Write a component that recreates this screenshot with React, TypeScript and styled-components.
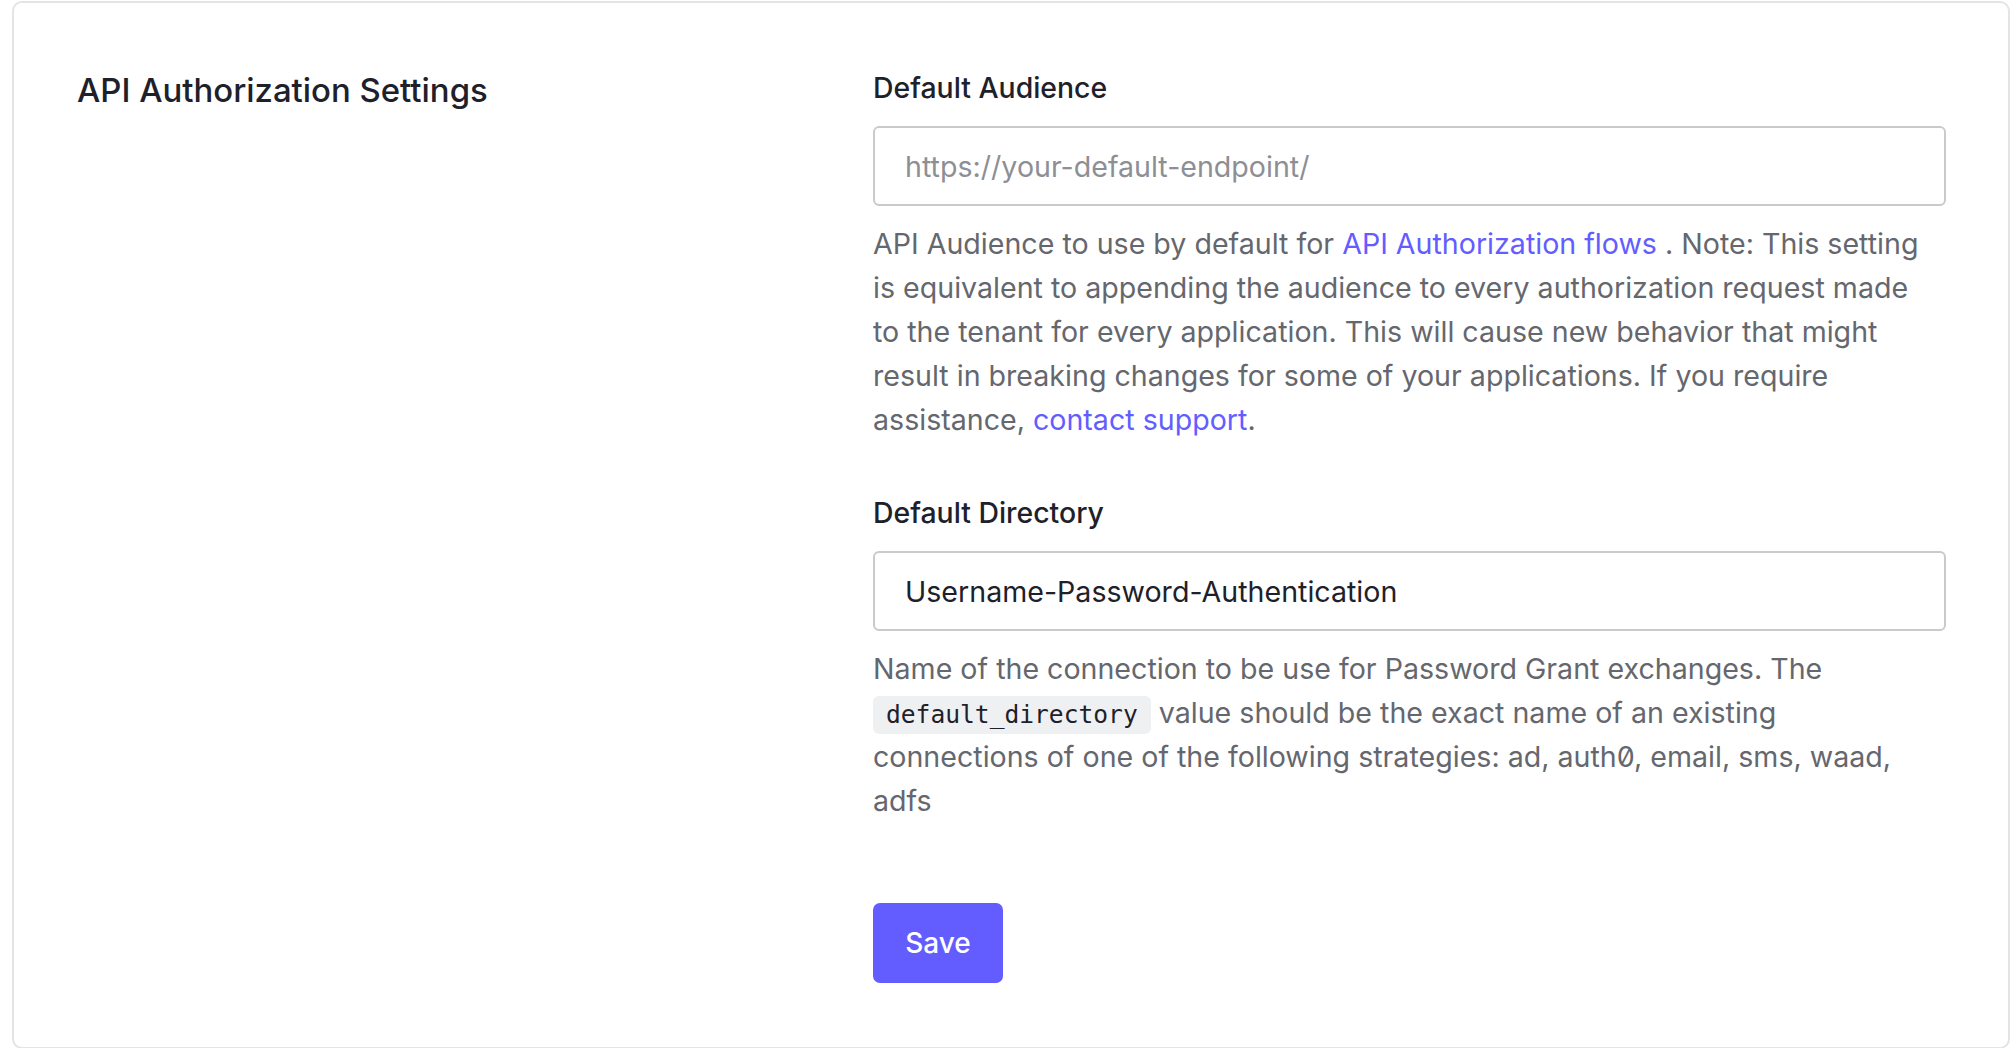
import React from "react";
import styled, { createGlobalStyle } from "styled-components";

const GlobalStyle = createGlobalStyle`
  html, body {
    margin: 0;
    padding: 0;
    background: #ffffff;
  }
  body {
    font-family: Inter, "Noto Sans", "Liberation Sans", sans-serif;
    color: #1e212a;
  }
  * { box-sizing: border-box; }
`;

const Card = styled.section`
  margin: 1px 0 0 12px;
  width: 1998px;
  border: 2px solid #e4e4e6;
  border-radius: 10px;
  padding: 64px 62px 64px 63px;
  display: grid;
  grid-template-columns: 796px 1fr;
  background: #fff;
`;

const Heading = styled.h2`
  margin: 0;
  font-size: 32.9px;
  line-height: 46px;
  font-weight: 500;
  color: #1e212a;
  letter-spacing: 0;
`;

const Column = styled.div`
  display: flex;
  flex-direction: column;
`;

const Field = styled.div`
  display: flex;
  flex-direction: column;
  & + & {
    margin-top: 50px;
  }
`;

const Label = styled.label`
  font-size: 28.4px;
  line-height: 42px;
  font-weight: 500;
  color: #1e212a;
  margin-bottom: 17px;
`;

const Input = styled.input`
  height: 80px;
  width: 100%;
  border: 2px solid #c9cace;
  border-radius: 6px;
  padding: 0 30px;
  font-family: inherit;
  font-size: 28.6px;
  color: #1e212a;
  background: #fff;
  outline: none;
  &::placeholder {
    color: #8d8f95;
  }
`;

const Help = styled.p`
  margin: 16px 0 0;
  max-width: 1058px;
  font-size: 28.6px;
  line-height: 44px;
  color: #65676e;
  font-feature-settings: "zero" 1;
`;

const Link = styled.a`
  color: #635dff;
  text-decoration: none;
`;

const Code = styled.code`
  display: inline-block;
  font-family: "DejaVu Sans Mono", "Liberation Mono", monospace;
  font-size: 24.6px;
  line-height: 38px;
  padding: 0 13px;
  border-radius: 6px;
  background: #eff0f2;
  color: #1e212a;
  vertical-align: baseline;
`;

const SaveButton = styled.button`
  align-self: flex-start;
  margin-top: 80px;
  width: 130px;
  height: 80px;
  border: none;
  border-radius: 7px;
  background: #635dff;
  color: #fff;
  font-family: inherit;
  font-size: 28px;
  font-weight: 500;
  cursor: pointer;
`;

export default function App() {
  return (
    <>
      <GlobalStyle />
      <Card>
        <Heading>API Authorization Settings</Heading>
        <Column>
          <Field>
            <Label htmlFor="aud">Default Audience</Label>
            <Input id="aud" placeholder="https://your-default-endpoint/" />
            <Help>
              API Audience to use by default for{" "}
              <Link href="#">API Authorization flows</Link> . Note: This setting
              is equivalent to appending the audience to every authorization
              request made to the tenant for every application. This will cause
              new behavior that might result in breaking changes for some of your
              applications. If you require assistance,{" "}
              <Link href="#">contact support</Link>.
            </Help>
          </Field>
          <Field>
            <Label htmlFor="dir">Default Directory</Label>
            <Input id="dir" defaultValue="Username-Password-Authentication" />
            <Help>
              Name of the connection to be use for Password Grant exchanges. The{" "}
              <Code>default_directory</Code> value should be the exact name of an
              existing connections of one of the following strategies: ad,
              auth0, email, sms, waad, adfs
            </Help>
          </Field>
          <SaveButton type="button">Save</SaveButton>
        </Column>
      </Card>
    </>
  );
}
